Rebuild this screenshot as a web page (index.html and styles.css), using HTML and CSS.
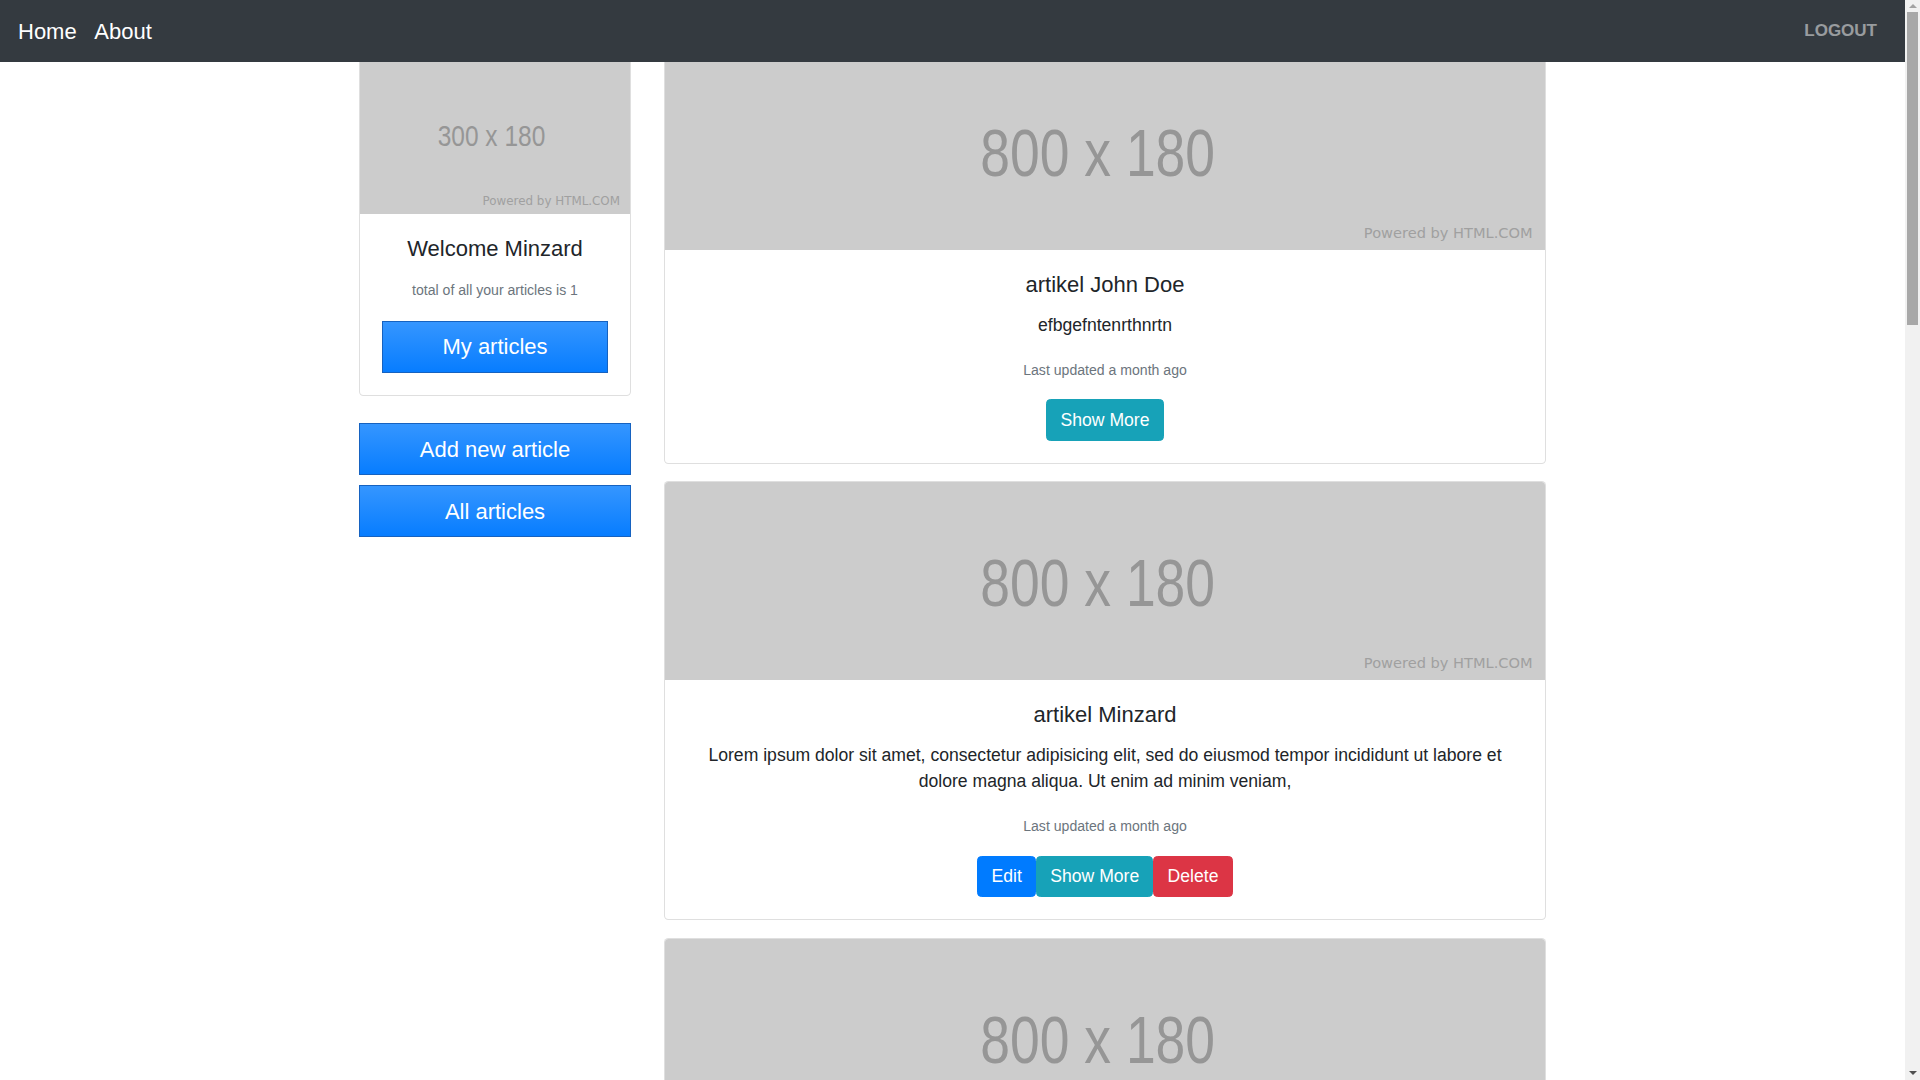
FILE: index.html
```html
<!DOCTYPE html>
<html lang="en">
<head>
<meta charset="utf-8">
<title>Articles</title>
<link rel="stylesheet" href="styles.css">
</head>
<body>
<nav class="navbar">
  <div class="nav-left">
    <a class="nav-link brand" href="#">Home</a>
    <a class="nav-link" href="#">About</a>
  </div>
  <a class="logout" href="#">LOGOUT</a>
</nav>

<div class="scrollbar" aria-hidden="true">
  <span class="arrow arrow-up"></span>
  <span class="thumb"></span>
  <span class="arrow arrow-down"></span>
</div>

<div class="page">
  <aside class="sidebar">
    <div class="card">
      <div class="ph ph-small">
        <span class="ph-size">300 x 180</span>
        <span class="ph-credit">Powered by HTML.COM</span>
      </div>
      <div class="card-body">
        <h5 class="card-title">Welcome Minzard</h5>
        <p class="card-text side-text"><small class="muted">total of all your articles is 1</small></p>
        <a class="btn-grad" href="#">My articles</a>
      </div>
    </div>
    <div class="side-actions">
      <a class="btn-grad" href="#">Add new article</a>
      <a class="btn-grad" href="#">All articles</a>
    </div>
  </aside>

  <main class="articles">
    <div class="card article">
      <div class="ph ph-large">
        <span class="ph-size">800 x 180</span>
        <span class="ph-credit">Powered by HTML.COM</span>
      </div>
      <div class="card-body">
        <h5 class="card-title">artikel John Doe</h5>
        <p class="card-text">efbgefntenrthnrtn</p>
        <p class="card-text meta"><small class="muted">Last updated a month ago</small></p>
        <div class="actions">
          <a class="btn btn-info" href="#">Show More</a>
        </div>
      </div>
    </div>

    <div class="card article">
      <div class="ph ph-large">
        <span class="ph-size">800 x 180</span>
        <span class="ph-credit">Powered by HTML.COM</span>
      </div>
      <div class="card-body">
        <h5 class="card-title">artikel Minzard</h5>
        <p class="card-text">Lorem ipsum dolor sit amet, consectetur adipisicing elit, sed do eiusmod tempor incididunt ut labore et dolore magna aliqua. Ut enim ad minim veniam,</p>
        <p class="card-text meta"><small class="muted">Last updated a month ago</small></p>
        <div class="actions">
          <a class="btn btn-primary" href="#">Edit</a>
          <a class="btn btn-info" href="#">Show More</a>
          <a class="btn btn-danger" href="#">Delete</a>
        </div>
      </div>
    </div>

    <div class="card article">
      <div class="ph ph-large">
        <span class="ph-size">800 x 180</span>
        <span class="ph-credit">Powered by HTML.COM</span>
      </div>
      <div class="card-body"></div>
    </div>
  </main>
</div>
</body>
</html>
```

FILE: styles.css
```css
* {
  box-sizing: border-box;
}

html, body {
  margin: 0;
  padding: 0;
}

body {
  font-family: "Liberation Sans", Arial, sans-serif;
  font-size: 17.6px;
  line-height: 1.5;
  color: #212529;
  background: #fff;
  padding-right: 15px;
}

a {
  text-decoration: none;
}

/* ---------- navbar ---------- */
.navbar {
  position: fixed;
  top: 0;
  left: 0;
  right: 15px;
  height: 62px;
  background: #343a40;
  display: flex;
  align-items: center;
  justify-content: space-between;
  padding: 0 28px 0 18px;
  z-index: 10;
}

.nav-left {
  display: flex;
  align-items: center;
  gap: 17.6px;
}

.nav-link {
  color: #fff;
  font-size: 22px;
  line-height: 33px;
}

.logout {
  color: rgba(255, 255, 255, 0.5);
  font-weight: 700;
  font-size: 17px;
  line-height: 26px;
}

/* ---------- classic scrollbar ---------- */
.scrollbar {
  position: fixed;
  top: 0;
  right: 0;
  bottom: 0;
  width: 15px;
  background: #f1f1f1;
  z-index: 20;
  display: flex;
  flex-direction: column;
  align-items: center;
}

.thumb {
  width: 11px;
  height: 313px;
  background: #a8a8a8;
  margin-top: 4px;
}

.arrow {
  width: 0;
  height: 0;
  border-left: 4px solid transparent;
  border-right: 4px solid transparent;
}

.arrow-up {
  margin-top: 4px;
  border-bottom: 4px solid #a3a3a3;
}

.arrow-down {
  margin-top: auto;
  margin-bottom: 5px;
  border-top: 4px solid #505050;
}

/* ---------- layout ---------- */
.page {
  width: 1187px;
  margin: 0 auto;
  padding-top: 51px;
  min-height: 3623px;
  display: flex;
  align-items: flex-start;
  gap: 33px;
}

.sidebar {
  width: 272px;
  flex: none;
}

.articles {
  width: 882px;
  flex: none;
  display: flex;
  flex-direction: column;
  gap: 17.6px;
}

/* ---------- cards ---------- */
.card {
  background: #fff;
  border: 1px solid rgba(0, 0, 0, 0.125);
  border-radius: 4.4px;
  overflow: hidden;
}

.card-body {
  padding: 22px;
  text-align: center;
}

.card-title {
  margin: 0 0 13.2px;
  font-size: 22px;
  font-weight: 400;
  line-height: 1.2;
}

.card-text {
  margin: 0 0 17.6px;
  line-height: 26.4px;
}

.side-text {
  margin-bottom: 18px;
}

.meta {
  margin-bottom: 16px;
}

.muted {
  font-size: 14.08px;
  color: #6c757d;
}

/* ---------- placeholder images ---------- */
.ph {
  background: #cccccc;
  display: grid;
}

.ph-small {
  height: 162px;
}

.ph-large {
  height: 198px;
}

.ph-size {
  grid-area: 1 / 1;
  place-self: center;
  color: #969696;
  line-height: 1;
  white-space: nowrap;
  transform: scaleX(0.81);
}

.ph-small .ph-size {
  font-size: 29.5px;
  padding: 6px 8px 0 0;
  transform: scaleX(0.83);
}

.ph-large .ph-size {
  font-size: 66px;
  padding: 4px 18px 0 0;
}

.ph-credit {
  grid-area: 1 / 1;
  align-self: end;
  justify-self: end;
  font-family: "DejaVu Sans", Verdana, sans-serif;
  color: #a0a0a0;
  line-height: 1;
  white-space: nowrap;
}

.ph-small .ph-credit {
  font-size: 11.9px;
  margin: 0 10px 6.5px 0;
}

.ph-large .ph-credit {
  font-size: 14.6px;
  margin: 0 12.4px 9.4px 0;
}

/* ---------- gradient buttons (sidebar) ---------- */
.btn-grad {
  display: block;
  width: 100%;
  text-align: center;
  color: #fff;
  font-size: 22px;
  line-height: 33px;
  padding: 8.5px 17.6px;
  background: linear-gradient(180deg, #3596ff 0%, #077dff 100%);
  border: 1px solid #1662c0;
}

.side-actions {
  margin-top: 27.5px;
  display: flex;
  flex-direction: column;
  gap: 10px;
}

/* ---------- small buttons ---------- */
.actions {
  display: flex;
  justify-content: center;
}

.btn {
  display: inline-block;
  color: #fff;
  font-size: 17.6px;
  line-height: 26.4px;
  padding: 6.6px 13.2px;
  border: 1px solid transparent;
  border-radius: 4.4px;
}

.btn-primary {
  background: #007bff;
  border-color: #007bff;
}

.btn-info {
  background: #17a2b8;
  border-color: #17a2b8;
}

.btn-danger {
  background: #dc3545;
  border-color: #dc3545;
}
```
